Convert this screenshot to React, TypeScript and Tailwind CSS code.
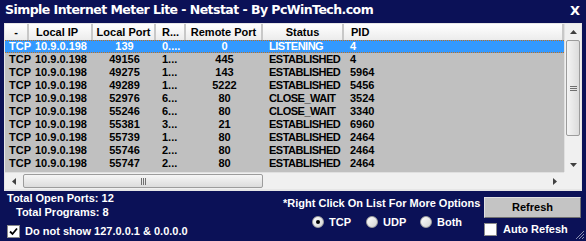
import React from 'react';

const rows = [
  ['TCP', '10.9.0.198', '139', '0....', '0', 'LISTENING', '4'],
  ['TCP', '10.9.0.198', '49156', '1...', '445', 'ESTABLISHED', '4'],
  ['TCP', '10.9.0.198', '49275', '1...', '143', 'ESTABLISHED', '5964'],
  ['TCP', '10.9.0.198', '49289', '1...', '5222', 'ESTABLISHED', '5456'],
  ['TCP', '10.9.0.198', '52976', '6...', '80', 'CLOSE_WAIT', '3524'],
  ['TCP', '10.9.0.198', '55246', '6...', '80', 'CLOSE_WAIT', '3340'],
  ['TCP', '10.9.0.198', '55381', '3...', '21', 'ESTABLISHED', '6960'],
  ['TCP', '10.9.0.198', '55739', '1...', '80', 'ESTABLISHED', '2464'],
  ['TCP', '10.9.0.198', '55746', '2...', '80', 'ESTABLISHED', '2464'],
  ['TCP', '10.9.0.198', '55747', '2...', '80', 'ESTABLISHED', '2464'],
];

// width, header align, cell class
const cols = [
  { w: 'w-[24px]', head: '-', hc: 'justify-center', cc: 'pl-[4px]' },
  { w: 'w-[64px]', head: 'Local IP', hc: 'pl-[7px]', cc: 'pl-[6px]' },
  { w: 'w-[63px]', head: 'Local Port', hc: 'justify-center', cc: 'justify-center' },
  { w: 'w-[30px]', head: 'R...', hc: 'pl-[6px]', cc: 'pl-[6px]' },
  { w: 'w-[77px]', head: 'Remote Port', hc: 'justify-center', cc: 'justify-center' },
  { w: 'w-[81px]', head: 'Status', hc: 'justify-center', cc: 'pl-[6px] tracking-[-0.5px]' },
  { w: 'flex-1', head: 'PID', hc: 'pl-[7px]', cc: 'pl-[6px]' },
];

function Check({ on }: { on?: boolean }) {
  return (
    <div className="w-[13px] h-[13px] bg-white border border-[#8a8a8a] flex items-center justify-center shrink-0">
      {on && (
        <svg width="9" height="9" viewBox="0 0 9 9">
          <path d="M1 4.5 L3.5 7 L8 1.5" stroke="#000" strokeWidth="1.8" fill="none" />
        </svg>
      )}
    </div>
  );
}

function Radio({ on, label }: { on?: boolean; label: string }) {
  return (
    <div className="w-[54px] flex items-center gap-[5px]">
      <div className="w-[12px] h-[12px] rounded-full bg-gradient-to-br from-white to-[#d4d4d4] border border-[#a0a0a0] flex items-center justify-center shrink-0">
        {on && <div className="w-[4px] h-[4px] rounded-full bg-black" />}
      </div>
      <span>{label}</span>
    </div>
  );
}

export default function App() {
  return (
    <div className="w-[586px] h-[241px] bg-[#0b1157] flex flex-col text-[11px] font-bold font-['Liberation_Sans',Arial,sans-serif] overflow-hidden">
      <div className="h-[23px] flex items-center justify-between pl-[5px] pr-[6px] text-white pb-[2px]">
        <span className="text-[12.5px] font-['DejaVu_Sans',sans-serif] tracking-[-0.55px]">
          Simple Internet Meter Lite - Netstat - By PcWinTech.com
        </span>
        <span className="text-[13px] font-['DejaVu_Sans',sans-serif]">X</span>
      </div>

      <div className="mx-[4px] w-[578px] h-[168px] border border-[#e6e6e6] border-b-2 bg-[#f2f2f2] flex flex-col">
        <div className="flex h-[149px]">
          <div className="flex-1 flex flex-col bg-[#c0c0c0]">
            <div className="flex h-[16px] bg-[#f4f4f4]">
              {cols.map((c, i) => (
                <div
                  key={i}
                  className={`${c.w} flex items-center ${c.hc} bg-gradient-to-b from-white to-[#ececec] border-r-2 border-[#c8c8c8] text-black`}
                >
                  {c.head}
                </div>
              ))}
            </div>
            {rows.map((r, ri) => (
              <div
                key={ri}
                className={`flex h-[13px] ${ri === 0 ? 'bg-[#3399ff] text-white border-y border-dotted border-[#c07020]' : 'text-black'}`}
              >
                {r.map((v, ci) => (
                  <div key={ci} className={`${cols[ci].w} flex items-center ${cols[ci].cc} whitespace-nowrap`}>
                    {v}
                  </div>
                ))}
              </div>
            ))}
          </div>
          <div className="w-[17px] flex flex-col bg-[#f0f0f0] border-l border-[#e0e0e0]">
            <div className="h-[16px] flex items-center justify-center">
              <svg width="7" height="4" viewBox="0 0 7 4"><path d="M3.5 0 L7 4 L0 4Z" fill="#404040" /></svg>
            </div>
            <div className="h-[96px] mx-[1px] bg-gradient-to-r from-[#f4f4f4] to-[#dcdcdc] border border-[#9c9c9c] rounded-[2px] flex items-center justify-center">
              <svg width="7" height="5" viewBox="0 0 7 5"><path d="M0 .5H7M0 2.5H7M0 4.5H7" stroke="#707070" /></svg>
            </div>
            <div className="flex-1" />
            <div className="h-[14px] flex items-center justify-center">
              <svg width="7" height="4" viewBox="0 0 7 4"><path d="M0 0 L7 0 L3.5 4Z" fill="#404040" /></svg>
            </div>
          </div>
        </div>
        <div className="flex h-[17px]">
          <div className="flex-1 flex items-center bg-[#f0f0f0] border-t border-[#e0e0e0]">
            <div className="w-[18px] flex items-center justify-center">
              <svg width="4" height="7" viewBox="0 0 4 7"><path d="M0 3.5 L4 0 L4 7Z" fill="#404040" /></svg>
            </div>
            <div className="w-[240px] h-[14px] bg-gradient-to-b from-[#f6f6f6] to-[#dcdcdc] border border-[#9c9c9c] rounded-[2px] flex items-center justify-center">
              <svg width="5" height="7" viewBox="0 0 5 7"><path d="M.5 0V7M2.5 0V7M4.5 0V7" stroke="#707070" /></svg>
            </div>
            <div className="flex-1" />
            <div className="w-[18px] flex items-center justify-center">
              <svg width="4" height="7" viewBox="0 0 4 7"><path d="M0 0 L4 3.5 L0 7Z" fill="#404040" /></svg>
            </div>
          </div>
          <div className="w-[17px] bg-[#f0f0f0]" />
        </div>
      </div>

      <div className="flex-1 flex text-white relative">
        <div className="w-[279px] pl-[7px] flex flex-col whitespace-nowrap">
          <div className="h-[14px] leading-[14px]">Total Open Ports: 12</div>
          <div className="h-[14px] leading-[14px] pl-[9px]">Total Programs: 8</div>
          <div className="flex items-center gap-[5px] mt-[4px]">
            <Check on />
            <span>Do not show 127.0.0.1 &amp; 0.0.0.0</span>
          </div>
        </div>
        <div className="w-[205px] flex flex-col pt-[5px] whitespace-nowrap">
          <div className="h-[14px] leading-[14px] pl-[4px]">*Right Click On List For More Options</div>
          <div className="flex pl-[33px] mt-[4px]">
            <Radio on label="TCP" />
            <Radio label="UDP" />
            <Radio label="Both" />
          </div>
        </div>
        <div className="flex flex-col pt-[6px] whitespace-nowrap">
          <div className="w-[97px] h-[21px] bg-[#c4c4c4] border border-t-[#e0e0e0] border-l-[#e0e0e0] border-r-[#707070] border-b-[#707070] flex items-center justify-center text-black">
            Refresh
          </div>
          <div className="flex items-center gap-[6px] mt-[3px]">
            <Check />
            <span>Auto Refesh</span>
          </div>
        </div>
        <svg className="absolute right-[1px] bottom-[1px]" width="11" height="11" viewBox="0 0 11 11">
          <path d="M10 2 L2 10 M10 5 L5 10 M10 8 L8 10" stroke="#8a8fb0" strokeWidth="1" />
        </svg>
      </div>
    </div>
  );
}
